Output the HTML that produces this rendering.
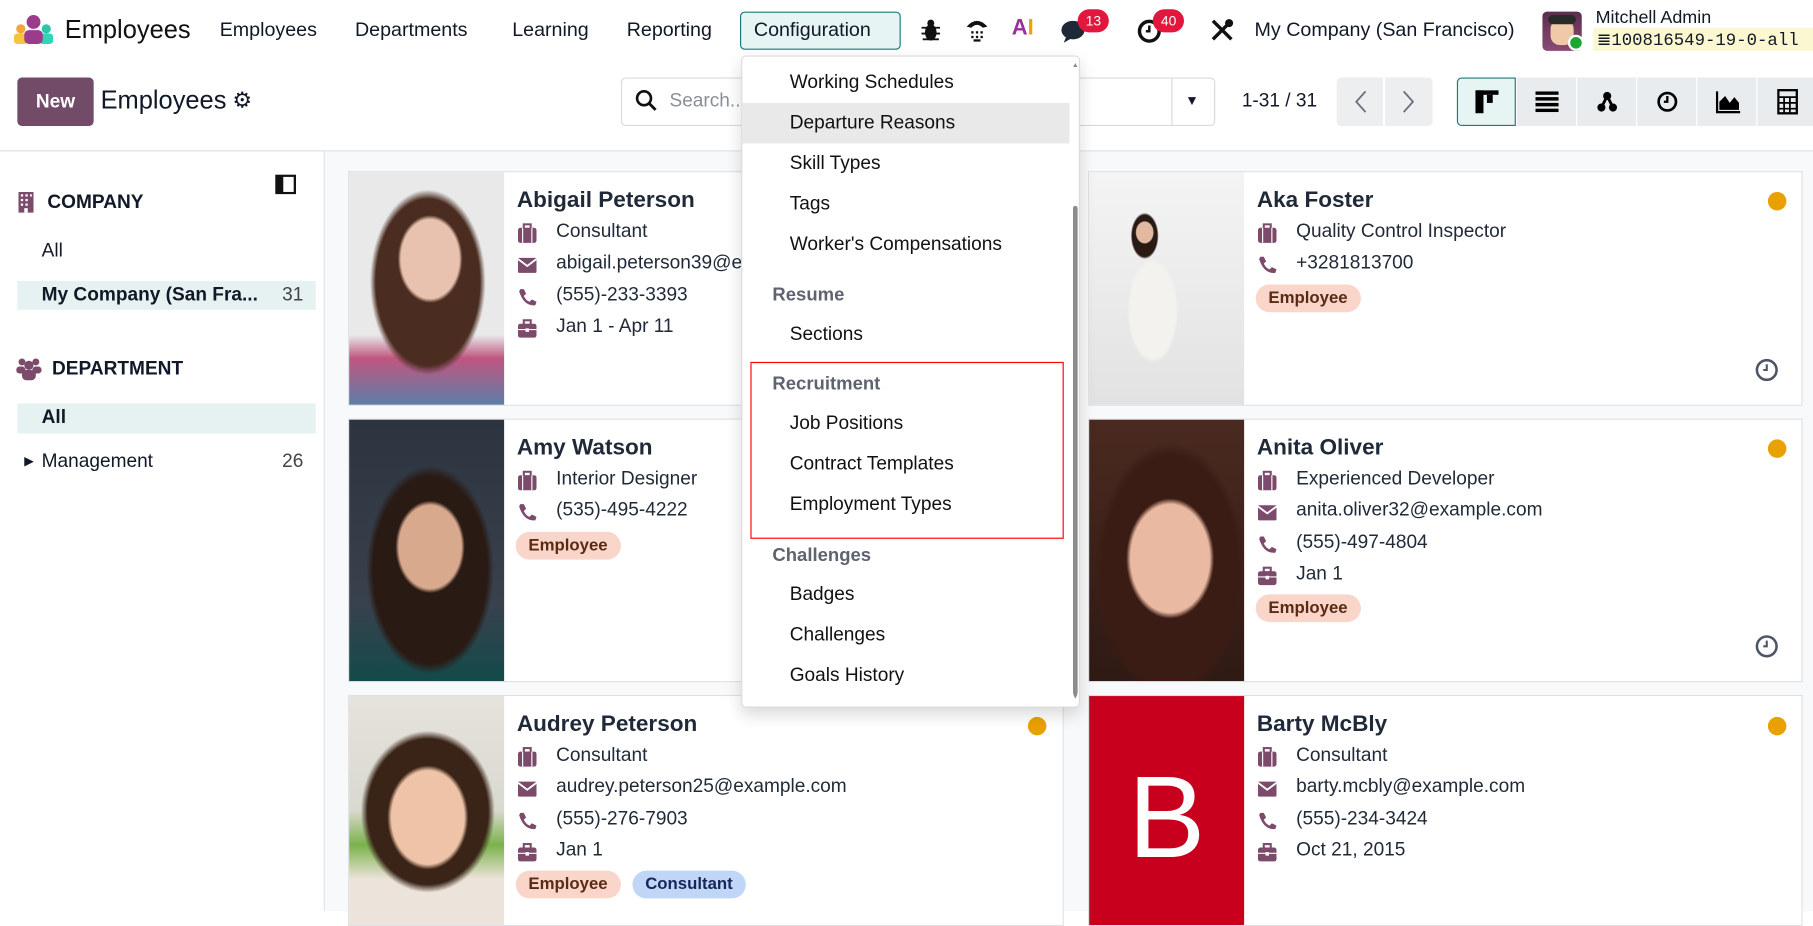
<!DOCTYPE html>
<html><head><meta charset="utf-8"><style>
*{box-sizing:border-box;margin:0;padding:0}
html,body{width:1813px;height:911px;overflow:hidden;background:#fff}
#w{position:absolute;left:0;top:0;width:1568px;height:788px;transform:scale(1.15625);transform-origin:0 0;font-family:"Liberation Sans",sans-serif;color:#111827;font-size:16.5px}
.a{position:absolute;white-space:nowrap}
.nav{font-size:17px}
.card{position:absolute;background:#fff;border:1px solid #dee2e6}
.card .ph{position:absolute;left:0;top:0;bottom:0;width:134px;overflow:hidden}
.card .nm{position:absolute;left:145px;top:13px;font-size:19.5px;font-weight:bold;color:#1f2937;white-space:nowrap}
.ln{position:absolute;font-size:16.5px;color:#1f2937;white-space:nowrap}
.ln svg{position:absolute;left:0;top:2px}
.ln span{position:absolute;left:34px;top:0;white-space:nowrap}
.tag{position:absolute;height:24px;border-radius:12px;padding:0 11px;font-size:14.5px;line-height:24px;font-weight:bold;white-space:nowrap}
.te{background:#f9d6c9;color:#5a2a15}
.tc{background:#bfd6f6;color:#17265a}
.dot{position:absolute;width:16px;height:16px;border-radius:50%;background:#e9a100}
.dd{position:absolute;left:641px;top:48px;width:293px;height:564px;background:#fff;border:1px solid #dcdcdc;border-radius:4px;box-shadow:0 6px 14px rgba(0,0,0,.15)}
.it{position:absolute;left:41px;font-size:16.5px;color:#111;white-space:nowrap}
.hd{position:absolute;left:26px;font-size:16px;color:#5f6370;font-weight:bold}
.vb{position:absolute;top:67px;width:51px;height:42px;background:#e9ecef}
</style></head><body><div id="w">
<svg class="a" style="left:12px;top:13px" width="34" height="26" viewBox="0 0 34 26"><circle cx="17" cy="6" r="6" fill="#9b3b8c"/><circle cx="6" cy="12" r="4" fill="#f2a53b"/><circle cx="28" cy="12" r="4" fill="#2fc6a8"/><rect x="0" y="16" width="12" height="9" rx="3" fill="#f7c23e"/><rect x="22" y="16" width="12" height="9" rx="3" fill="#2fd6b5"/><rect x="9" y="13" width="16" height="12" rx="4" fill="#9b3b8c"/></svg>
<div class="a" style="left:56px;top:13px;font-size:22px;color:#111">Employees</div>
<div class="a nav" style="left:190px;top:16px">Employees</div>
<div class="a nav" style="left:307px;top:16px">Departments</div>
<div class="a nav" style="left:443px;top:16px">Learning</div>
<div class="a nav" style="left:542px;top:16px">Reporting</div>
<div class="a" style="left:640px;top:10px;width:139px;height:33px;border:1px solid #1a7a7a;border-radius:4px;background:#e6f4f4"></div>
<div class="a nav" style="left:652px;top:16px">Configuration</div>
<svg class="a" style="left:796px;top:15px" width="18" height="22" viewBox="0 0 18 22"><ellipse cx="9" cy="13" rx="5" ry="7" fill="#111"/><circle cx="9" cy="5" r="3" fill="#111"/><path d="M1 9H17M1 14H17M2 19H16" stroke="#111" stroke-width="1.6"/></svg>
<svg class="a" style="left:834px;top:15px" width="22" height="22" viewBox="0 0 22 22"><path d="M2 8 Q11 -2 20 8 L16 9 Q11 4 6 9Z" fill="#111"/><g fill="#111"><rect x="6" y="12" width="2" height="2"/><rect x="10" y="12" width="2" height="2"/><rect x="14" y="12" width="2" height="2"/><rect x="6" y="16" width="2" height="2"/><rect x="10" y="16" width="2" height="2"/><rect x="14" y="16" width="2" height="2"/><rect x="8" y="19" width="6" height="2"/></g></svg>
<div class="a" style="left:875px;top:14px;font-size:19px;font-weight:bold;color:#9a2fa0">A<span style="color:#f0a000">I</span></div>
<svg class="a" style="left:917px;top:16px" width="24" height="22" viewBox="0 0 24 22"><ellipse cx="11" cy="10" rx="10" ry="8" fill="#1f2937"/><path d="M5 16 L3 21 L10 17Z" fill="#1f2937"/></svg>
<div class="a" style="left:932px;top:8px;height:20px;border-radius:10px;background:#e3173e;color:#fff;font-size:12px;line-height:20px;padding:0 7px">13</div>
<svg class="a" style="left:983px;top:16px" width="22" height="22" viewBox="0 0 22 22"><circle cx="11" cy="11" r="8.5" fill="none" stroke="#111" stroke-width="3"/><path d="M11 6V11H8" stroke="#111" stroke-width="2.2" fill="none"/></svg>
<div class="a" style="left:997px;top:8px;height:20px;border-radius:10px;background:#e3173e;color:#fff;font-size:12px;line-height:20px;padding:0 7px">40</div>
<svg class="a" style="left:1046px;top:15px" width="22" height="22" viewBox="0 0 22 22"><path d="M3 3 L19 19 M19 3 L3 19" stroke="#111" stroke-width="3"/><circle cx="17" cy="5" r="3.5" fill="#111"/></svg>
<div class="a nav" style="left:1085px;top:16px">My Company (San Francisco)</div>
<div class="a" style="left:1334px;top:10px;width:34px;height:34px;border-radius:4px;background:linear-gradient(#5a2e4d,#8a4a73)"><div style="position:absolute;left:7px;top:7px;width:20px;height:22px;border-radius:8px;background:#f0c9a8"></div><div style="position:absolute;left:5px;top:3px;width:24px;height:8px;border-radius:4px;background:#2a2a2a"></div></div>
<div class="a" style="left:1356px;top:30px;width:14px;height:14px;border-radius:50%;background:#1ba830;border:2px solid #fff"></div>
<div class="a" style="left:1380px;top:7px;font-size:15.5px">Mitchell Admin</div>
<div class="a" style="left:1378px;top:24px;width:190px;height:20px;background:#fbf7d0"></div>
<div class="a" style="left:1381px;top:25px;font-family:'Liberation Mono',monospace;font-size:15px">≣100816549-19-0-all</div>
<div class="a" style="left:15px;top:67px;width:66px;height:42px;background:#714b67;border-radius:4px;color:#fff;font-size:16.5px;line-height:42px;text-align:center;font-weight:bold">New</div>
<div class="a" style="left:87px;top:74px;font-size:22px">Employees</div>
<div class="a" style="left:201px;top:76px;font-size:19px">⚙</div>
<div class="a" style="left:537px;top:67px;width:514px;height:42px;border:1px solid #d8dadd;border-radius:4px"></div>
<div class="a" style="left:1013px;top:67px;width:1px;height:42px;background:#d8dadd"></div>
<svg class="a" style="left:549px;top:77px" width="20" height="20" viewBox="0 0 20 20"><circle cx="8" cy="8" r="6" fill="none" stroke="#111" stroke-width="2.3"/><path d="M12.5 12.5 L18 18" stroke="#111" stroke-width="2.5"/></svg>
<div class="a" style="left:579px;top:78px;color:#8a8f96">Search...</div>
<div class="a" style="left:1025px;top:80px;font-size:12px">▼</div>
<div class="a" style="left:1074px;top:78px">1-31 / 31</div>
<div class="a" style="left:1156px;top:67px;width:83px;height:42px;background:#eceef0;border-radius:4px"></div>
<div class="a" style="left:1196px;top:67px;width:2px;height:42px;background:#fff"></div>
<svg class="a" style="left:1170px;top:78px" width="14" height="20"><path d="M11 1 L3 10 L11 19" stroke="#6b7280" stroke-width="1.6" fill="none"/></svg>
<svg class="a" style="left:1211px;top:78px" width="14" height="20"><path d="M3 1 L11 10 L3 19" stroke="#6b7280" stroke-width="1.6" fill="none"/></svg>
<div class="vb" style="left:1260px;background:#e6f4f4;border:1px solid #1a7a7a;border-radius:4px 0 0 4px"></div>
<div class="vb" style="left:1312px"></div><div class="vb" style="left:1364px"></div><div class="vb" style="left:1416px"></div><div class="vb" style="left:1468px"></div><div class="vb" style="left:1520px;width:48px"></div>
<svg class="a" style="left:1276px;top:78px" width="20" height="20"><rect x="0" y="0" width="20" height="4"/><rect x="0" y="0" width="7" height="20"/><rect x="10" y="4" width="5" height="7"/></svg>
<svg class="a" style="left:1328px;top:79px" width="20" height="18"><rect y="0" width="20" height="3"/><rect y="5" width="20" height="3"/><rect y="10" width="20" height="3"/><rect y="15" width="20" height="3"/></svg>
<svg class="a" style="left:1381px;top:78px" width="18" height="20"><circle cx="9" cy="5" r="3.5"/><circle cx="4" cy="15" r="3.5"/><circle cx="14" cy="15" r="3.5"/><path d="M9 5 L4 15 M9 5 L14 15" stroke="#000" stroke-width="2.5"/></svg>
<svg class="a" style="left:1432px;top:78px" width="20" height="20"><circle cx="10" cy="10" r="7.5" fill="none" stroke="#000" stroke-width="2.3"/><path d="M10 5V10H7" stroke="#000" stroke-width="2" fill="none"/></svg>
<svg class="a" style="left:1484px;top:78px" width="22" height="20"><path d="M1 1V19H21" stroke="#000" stroke-width="2" fill="none"/><path d="M3 17 L3 10 L8 5 L12 11 L16 6 L20 11 L20 17Z"/></svg>
<svg class="a" style="left:1537px;top:77px" width="18" height="22"><rect x="1" y="1" width="16" height="20" fill="none" stroke="#000" stroke-width="2"/><path d="M1 7H17M1 12H17M1 17H17M6 7V21M11 7V21" stroke="#000" stroke-width="1.5"/></svg>
<div class="a" style="left:0;top:130px;width:1568px;height:1px;background:#dee2e6"></div>
<div class="a" style="left:280px;top:131px;width:1px;height:657px;background:#dee2e6"></div>
<svg class="a" style="left:238px;top:151px" width="18" height="17"><rect x="1" y="1" width="16" height="15" fill="none" stroke="#111" stroke-width="2"/><rect x="1" y="1" width="6" height="15" fill="#111"/></svg>
<svg class="a" style="left:16px;top:166px" width="13" height="18"><rect width="13" height="18" fill="#7c4a6b"/><g fill="#fff"><rect x="2" y="2" width="2" height="2"/><rect x="6" y="2" width="2" height="2"/><rect x="10" y="2" width="1.5" height="2"/><rect x="2" y="6" width="2" height="2"/><rect x="6" y="6" width="2" height="2"/><rect x="2" y="10" width="2" height="2"/><rect x="6" y="10" width="2" height="2"/><rect x="5" y="14" width="3" height="4"/></g></svg>
<div class="a" style="left:41px;top:166px;font-weight:bold;font-size:16.5px">COMPANY</div>
<div class="a" style="left:36px;top:208px">All</div>
<div class="a" style="left:15px;top:243px;width:258px;height:25px;background:#e6f2f2"></div>
<div class="a" style="left:36px;top:246px;font-weight:bold">My Company (San Fra...</div>
<div class="a" style="left:244px;top:246px;color:#444">31</div>
<svg class="a" style="left:14px;top:309px" width="22" height="20"><circle cx="5" cy="4" r="3" fill="#7c4a6b"/><circle cx="17" cy="4" r="3" fill="#7c4a6b"/><circle cx="11" cy="7" r="4" fill="#7c4a6b"/><rect x="0" y="8" width="8" height="6" rx="3" fill="#7c4a6b"/><rect x="14" y="8" width="8" height="6" rx="3" fill="#7c4a6b"/><rect x="5" y="11" width="12" height="9" rx="4" fill="#7c4a6b"/></svg>
<div class="a" style="left:45px;top:310px;font-weight:bold">DEPARTMENT</div>
<div class="a" style="left:15px;top:349px;width:258px;height:26px;background:#e6f2f2"></div>
<div class="a" style="left:36px;top:352px;font-weight:bold">All</div>
<div class="a" style="left:21px;top:392px;font-size:11px">▶</div>
<div class="a" style="left:36px;top:390px">Management</div>
<div class="a" style="left:244px;top:390px;color:#444">26</div>
<div class="a" style="left:281px;top:131px;width:1287px;height:657px;background:#f8f9fa"></div>

<div class="card" style="left:301px;top:148px;width:619px;height:203px">
 <div class="ph" style="background:radial-gradient(ellipse 28px 38px at 70px 75px,#e8c2ae 90%,transparent 100%),radial-gradient(ellipse 50px 80px at 68px 95px,#4a2c20 90%,transparent 100%),linear-gradient(#e9e9ea 0,#e9e9ea 70%,#c0567f 80%,#5c7ea8 100%)"></div>
 <div class="nm">Abigail Peterson</div>
</div>
<div class="card" style="left:301px;top:362px;width:619px;height:228px">
 <div class="ph" style="background:radial-gradient(ellipse 30px 40px at 70px 110px,#d9a98e 90%,transparent 100%),radial-gradient(ellipse 55px 90px at 70px 130px,#2a1a14 90%,transparent 100%),linear-gradient(#2c3440,#39414d 70%,#144a4a)"></div>
 <div class="nm">Amy Watson</div>
</div>
<div class="card" style="left:301px;top:601px;width:619px;height:200px">
 <div class="ph" style="background:radial-gradient(ellipse 35px 45px at 68px 105px,#efc3a7 90%,transparent 100%),radial-gradient(ellipse 58px 70px at 68px 100px,#3a2418 90%,transparent 100%),linear-gradient(#e6e2dc 0,#d9d9d0 50%,#7ab24a 65%,#ece3da 80%)"></div>
 <div class="nm">Audrey Peterson</div>
 <div class="dot" style="left:587px;top:18px"></div>
</div>
<div class="card" style="left:941px;top:148px;width:618px;height:203px">
 <div class="ph" style="background:radial-gradient(ellipse 8px 10px at 48px 52px,#e0b9a0 90%,transparent 100%),radial-gradient(ellipse 12px 20px at 48px 55px,#2a1a14 90%,transparent 100%),radial-gradient(ellipse 22px 45px at 55px 120px,#f3f2ee 90%,transparent 100%),linear-gradient(#f4f4f4,#e2e2e2)"></div>
 <div class="nm">Aka Foster</div>
 <div class="dot" style="left:587px;top:17px"></div>
 <svg class="a" style="left:575px;top:160px" width="22" height="22"><circle cx="11" cy="11" r="8.5" fill="none" stroke="#4b5563" stroke-width="2.2"/><path d="M11 6V11H8" stroke="#4b5563" stroke-width="1.8" fill="none"/></svg>
</div>
<div class="card" style="left:941px;top:362px;width:618px;height:228px">
 <div class="ph" style="background:radial-gradient(ellipse 38px 52px at 70px 120px,#e9b9a2 90%,transparent 100%),radial-gradient(ellipse 65px 110px at 70px 130px,#3b1c14 90%,transparent 100%),linear-gradient(#4a2a20,#2f1a14)"></div>
 <div class="nm">Anita Oliver</div>
 <div class="dot" style="left:587px;top:17px"></div>
 <svg class="a" style="left:575px;top:185px" width="22" height="22"><circle cx="11" cy="11" r="8.5" fill="none" stroke="#4b5563" stroke-width="2.2"/><path d="M11 6V11H8" stroke="#4b5563" stroke-width="1.8" fill="none"/></svg>
</div>
<div class="card" style="left:941px;top:601px;width:618px;height:200px">
 <div class="ph" style="background:#c8001e;color:#fff;font-size:100px;text-align:center;line-height:210px">B</div>
 <div class="nm">Barty McBly</div>
 <div class="dot" style="left:587px;top:18px"></div>
</div>

<div class="dd">
 <div class="it" style="top:13px">Working Schedules</div>
 <div class="a" style="left:0;top:40px;width:283px;height:35px;background:#e9e9ea"></div>
 <div class="it" style="top:48px">Departure Reasons</div>
 <div class="it" style="top:83px">Skill Types</div>
 <div class="it" style="top:118px">Tags</div>
 <div class="it" style="top:153px">Worker's Compensations</div>
 <div class="hd" style="top:198px">Resume</div>
 <div class="it" style="top:231px">Sections</div>
 <div class="hd" style="top:275px">Recruitment</div>
 <div class="it" style="top:308px">Job Positions</div>
 <div class="it" style="top:343px">Contract Templates</div>
 <div class="it" style="top:378px">Employment Types</div>
 <div class="hd" style="top:423px">Challenges</div>
 <div class="it" style="top:456px">Badges</div>
 <div class="it" style="top:491px">Challenges</div>
 <div class="it" style="top:526px">Goals History</div>
 <div class="a" style="left:286px;top:129px;width:4px;height:423px;background:#8c8c8c;border-radius:2px"></div>
 <div class="a" style="left:285px;top:5px;font-size:6px;color:#888">▲</div>
 <div class="a" style="left:285px;top:551px;font-size:6px;color:#888">▼</div>
 <div class="a" style="left:7px;top:264px;width:271px;height:153px;border:1.5px solid #f00"></div>
</div>
</div>
<script>
var I={b:'<svg width="18" height="18" viewBox="0 0 18 18"><rect x="1" y="4" width="16" height="13" rx="2" fill="#7c4a6b"/><rect x="6" y="1" width="6" height="4" fill="none" stroke="#7c4a6b" stroke-width="1.8"/><path d="M5 4V17M13 4V17" stroke="#fff" stroke-width="1"/></svg>',
e:'<svg width="18" height="18" viewBox="0 0 18 18"><rect x="1" y="3" width="16" height="13" rx="1" fill="#7c4a6b"/><path d="M1 4L9 10L17 4" stroke="#fff" stroke-width="1.6" fill="none"/></svg>',
p:'<svg width="18" height="18" viewBox="0 0 18 18"><path d="M3 2 L6 2 L8 6 L6 8 Q8 12 11 13 L13 11 L17 13 L16 16 Q6 17 2 4Z" fill="#7c4a6b"/></svg>',
c:'<svg width="18" height="18" viewBox="0 0 18 18"><rect x="1" y="5" width="16" height="12" rx="2" fill="#7c4a6b"/><rect x="6" y="2" width="6" height="4" fill="none" stroke="#7c4a6b" stroke-width="1.8"/><path d="M1 10H17" stroke="#fff" stroke-width="1"/><rect x="7.5" y="9" width="3" height="3" fill="#fff"/></svg>'};
var W=document.getElementById('w');
function L(x,y,ic,t){var d=document.createElement('div');d.className='ln';d.style.left=x+'px';d.style.top=y+'px';d.innerHTML=I[ic]+'<span>'+t+'</span>';W.appendChild(d);}
function T(x,y,c,t){var d=document.createElement('div');d.className='tag '+c;d.style.left=x+'px';d.style.top=y+'px';d.textContent=t;W.appendChild(d);}
var cards=[[446,148,[['b','Consultant'],['e','abigail.peterson39@example.com'],['p','(555)-233-3393'],['c','Jan 1 - Apr 11']],[]],
[446,362,[['b','Interior Designer'],['p','(535)-495-4222']],[['te','Employee']]],
[446,601,[['b','Consultant'],['e','audrey.peterson25@example.com'],['p','(555)-276-7903'],['c','Jan 1']],[['te','Employee'],['tc','Consultant']]],
[1086,148,[['b','Quality Control Inspector'],['p','+3281813700']],[['te','Employee']]],
[1086,362,[['b','Experienced Developer'],['e','anita.oliver32@example.com'],['p','(555)-497-4804'],['c','Jan 1']],[['te','Employee']]],
[1086,601,[['b','Consultant'],['e','barty.mcbly@example.com'],['p','(555)-234-3424'],['c','Oct 21, 2015']],[]]];
cards.forEach(function(c){var y=c[1]+43;c[2].forEach(function(l){L(c[0]+1,y,l[0],l[1]);y+=27.3;});var x=c[0];c[3].forEach(function(t){T(x,y,t[0],t[1]);x+=(t[1]=='Employee'?101:110);});});
W.appendChild(document.querySelector('.dd'));
</script>
</body></html>
